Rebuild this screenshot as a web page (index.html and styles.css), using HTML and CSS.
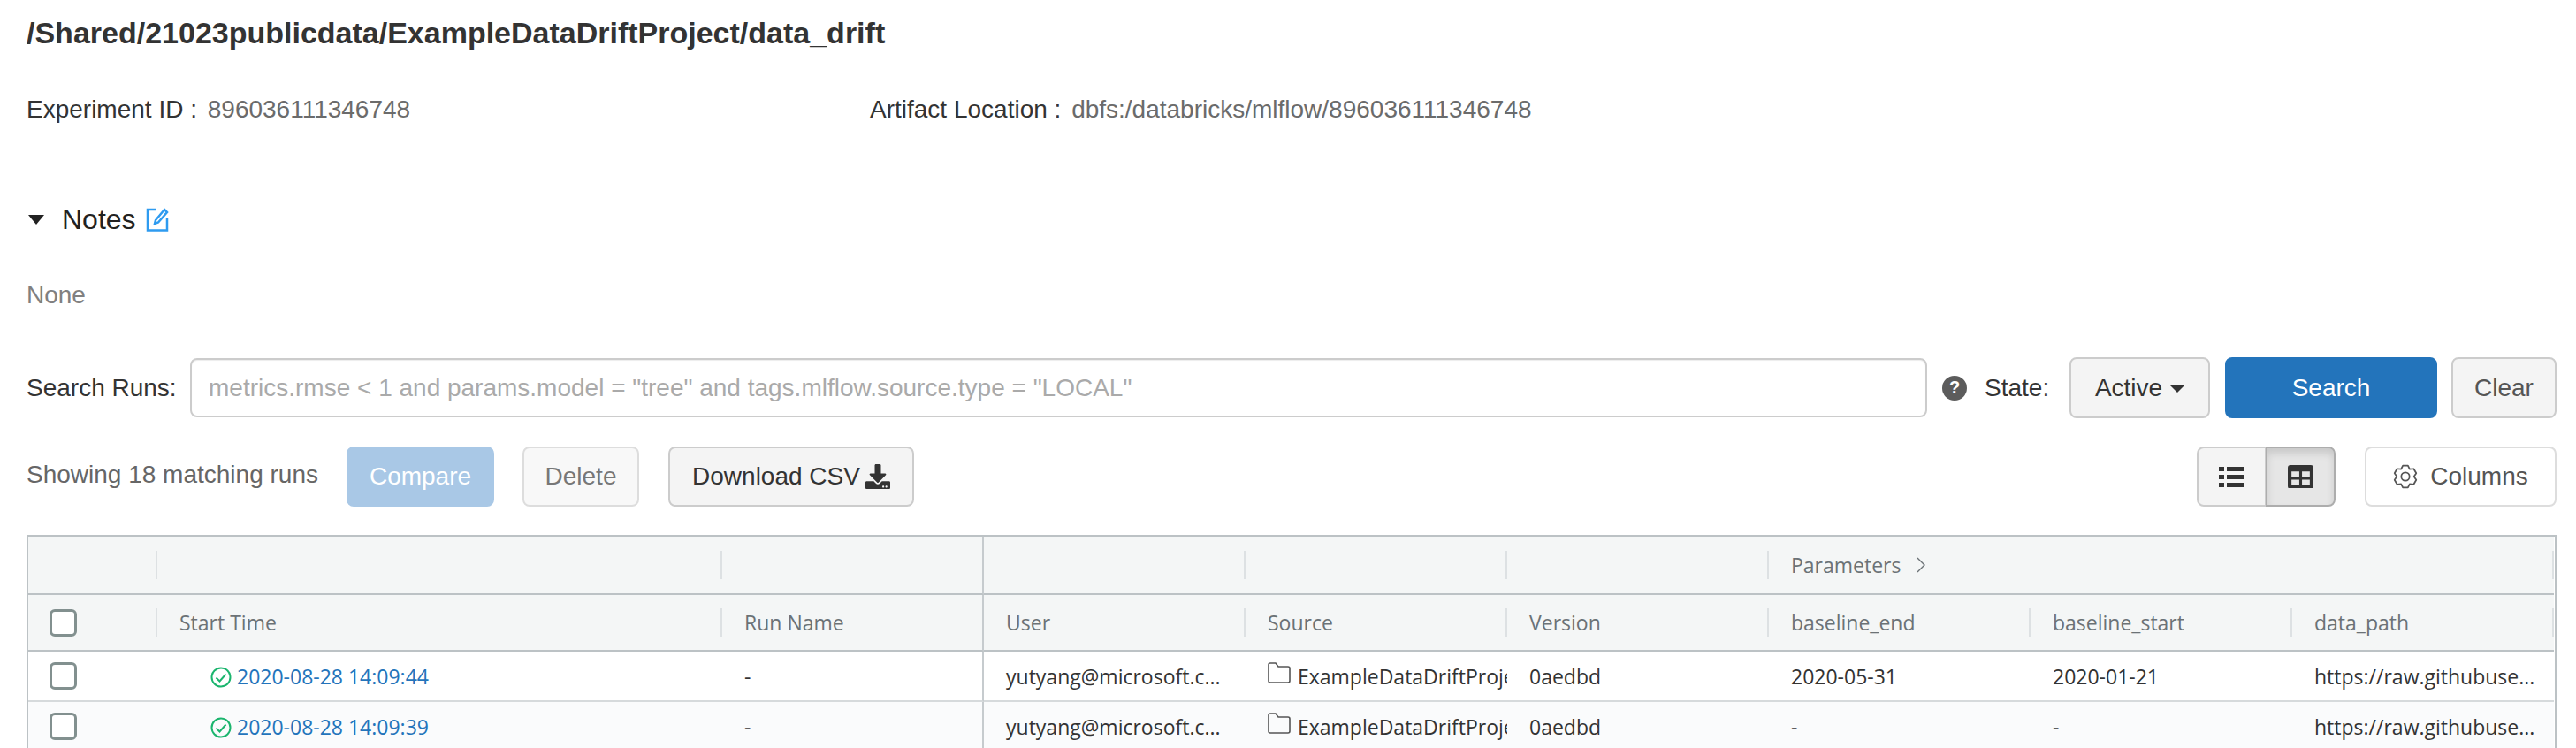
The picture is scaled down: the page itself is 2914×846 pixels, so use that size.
FILE: index.html
```html
<!DOCTYPE html>
<html>
<head>
    <title>data_drift - MLflow Experiment</title>
    <link rel="stylesheet" href="styles.css">
</head>
<body>
    <div class="container">
        <h1 class="title">/Shared/21023publicdata/ExampleDataDriftProject/data_drift</h1>

        <div class="meta-row">
            <div class="meta-item">
                <span class="meta-label">Experiment ID :</span>
                <span class="meta-value">896036111346748</span>
            </div>
            <div class="meta-item">
                <span class="meta-label">Artifact Location :</span>
                <span class="meta-value">dbfs:/databricks/mlflow/896036111346748</span>
            </div>
        </div>

        <div class="notes-head">
            <svg class="notes-caret" viewBox="0 0 18 11"><path d="M0 0h18L9 11z"/></svg>
            <span>Notes</span>
            <svg class="notes-edit" viewBox="0 0 26 27" fill="none">
                <path d="M12 2H2v23.500h22V11"/>
                <path d="M21 2l3 3-10 11.500-4 1.500 1-4z"/>
            </svg>
        </div>
        <p class="notes-body">None</p>

        <form class="search-row">
            <label class="search-label" for="search">Search Runs:</label>
            <input class="search-input" id="search" type="text" placeholder='metrics.rmse &lt; 1 and params.model = "tree" and tags.mlflow.source.type = "LOCAL"'>
            <span class="help-icon">?</span>
            <span class="state-label">State:</span>
            <button type="button" class="btn btn-state">Active <i class="btn-caret"></i></button>
            <button type="button" class="btn btn-search">Search</button>
            <button type="button" class="btn btn-clear">Clear</button>
        </form>

        <div class="actions-row">
            <span class="run-count">Showing 18 matching runs</span>
            <button type="button" class="btn btn-compare">Compare</button>
            <button type="button" class="btn btn-delete">Delete</button>
            <button type="button" class="btn btn-download">
                Download CSV
                <svg class="download-icon" viewBox="0 0 512 512"><path d="M216 0h80c13.300 0 24 10.700 24 24v168h87.700c17.800 0 26.700 21.500 14.100 34.100L269.700 378.300c-7.500 7.500-19.800 7.500-27.300 0L90.100 226.100c-12.600-12.600-3.700-34.100 14.100-34.100H192V24c0-13.300 10.700-24 24-24zm296 376v112c0 13.300-10.700 24-24 24H24c-13.300 0-24-10.700-24-24V376c0-13.300 10.700-24 24-24h146.700l49 49c20.100 20.100 52.500 20.100 72.600 0l49-49H488c13.300 0 24 10.700 24 24zm-124 88c0-11-9-20-20-20s-20 9-20 20 9 20 20 20 20-9 20-20zm64 0c0-11-9-20-20-20s-20 9-20 20 9 20 20 20 20-9 20-20z"/></svg>
            </button>
            <div class="view-toggle">
                <button type="button" class="toggle-btn">
                    <svg viewBox="0 0 29 23"><path d="M0 0h6v5H0zM9 0h20v5H9zM0 9h6v5H0zM9 9h20v5H9zM0 18h6v5H0zM9 18h20v5H9z"/></svg>
                </button>
                <button type="button" class="toggle-btn toggle-active">
                    <svg viewBox="0 0 28 26"><path fill-rule="evenodd" d="M3 0h22a3 3 0 0 1 3 3v20a3 3 0 0 1-3 3H3a3 3 0 0 1-3-3V3a3 3 0 0 1 3-3zM4 7v6h8.500V7zM15.500 7v6H24V7zM4 16v6h8.500v-6zM15.500 16v6H24v-6z"/></svg>
                </button>
            </div>
            <button type="button" class="btn btn-columns">
                <svg class="gear-icon" viewBox="0 0 24 24" fill="none">
                    <path d="M9.530 1.300h4.940l1.680 3.510 3.890-.31 2.480 4.280L20.300 12l2.220 3.220-2.480 4.280-3.890-.31-1.680 3.510H9.530l-1.680-3.510-3.890.31-2.480-4.280L3.700 12 1.480 8.780 3.960 4.500l3.890.31z"/>
                    <circle cx="12" cy="12" r="4"/>
                </svg>
                Columns
            </button>
        </div>

        <div class="table-wrap">
            <table class="runs-table">
                <colgroup>
                    <col class="col-check">
                    <col class="col-start">
                    <col class="col-name">
                    <col class="col-std" span="6">
                </colgroup>
                <thead>
                    <tr class="group-row">
                        <th><div class="th-cell"></div></th>
                        <th><div class="th-cell"></div></th>
                        <th class="fixed-end"></th>
                        <th><div class="th-cell"></div></th>
                        <th><div class="th-cell"></div></th>
                        <th><div class="th-cell"></div></th>
                        <th colspan="3">
                            <div class="th-cell">Parameters
                                <svg class="chevron" viewBox="0 0 10 18" fill="none"><path d="M1 1l8 8-8 8"/></svg>
                            </div>
                        </th>
                    </tr>
                    <tr class="column-row">
                        <th><div class="th-cell th-check"><span class="checkbox"></span></div></th>
                        <th><div class="th-cell">Start Time</div></th>
                        <th class="fixed-end"><div class="th-cell th-last">Run Name</div></th>
                        <th><div class="th-cell">User</div></th>
                        <th><div class="th-cell">Source</div></th>
                        <th><div class="th-cell">Version</div></th>
                        <th><div class="th-cell">baseline_end</div></th>
                        <th><div class="th-cell">baseline_start</div></th>
                        <th><div class="th-cell">data_path</div></th>
                    </tr>
                </thead>
                <tbody>
                    <tr>
                        <td class="td-check"><span class="checkbox"></span></td>
                        <td class="td-start">
                            <svg class="status-icon" viewBox="0 0 24 24" fill="none"><circle cx="12" cy="12" r="10.500"/><path d="M6.500 12.500l4 4 7-8"/></svg>
                            <a class="run-link" href="#">2020-08-28 14:09:44</a>
                        </td>
                        <td class="fixed-end">-</td>
                        <td>yutyang@microsoft.c...</td>
                        <td class="td-source">
                            <svg class="folder-icon" viewBox="0 0 26 25" fill="none"><path d="M1 3a2 2 0 0 1 2-2h6l3 4h11a2 2 0 0 1 2 2v14a2 2 0 0 1-2 2H3a2 2 0 0 1-2-2z"/></svg>
                            ExampleDataDriftProject
                        </td>
                        <td>0aedbd</td>
                        <td>2020-05-31</td>
                        <td>2020-01-21</td>
                        <td>https://raw.githubuse...</td>
                    </tr>
                    <tr>
                        <td class="td-check"><span class="checkbox"></span></td>
                        <td class="td-start">
                            <svg class="status-icon" viewBox="0 0 24 24" fill="none"><circle cx="12" cy="12" r="10.500"/><path d="M6.500 12.500l4 4 7-8"/></svg>
                            <a class="run-link" href="#">2020-08-28 14:09:39</a>
                        </td>
                        <td class="fixed-end">-</td>
                        <td>yutyang@microsoft.c...</td>
                        <td class="td-source">
                            <svg class="folder-icon" viewBox="0 0 26 25" fill="none"><path d="M1 3a2 2 0 0 1 2-2h6l3 4h11a2 2 0 0 1 2 2v14a2 2 0 0 1-2 2H3a2 2 0 0 1-2-2z"/></svg>
                            ExampleDataDriftProject
                        </td>
                        <td>0aedbd</td>
                        <td>-</td>
                        <td>-</td>
                        <td>https://raw.githubuse...</td>
                    </tr>
                </tbody>
            </table>
        </div>
    </div>
</body>
</html>
```

FILE: styles.css
```css
html,
body {
	height: 100%;
	overflow: hidden;
}

body {
	margin: 0;
	background: #fff;
	color: #333;
	font-family: "Liberation Sans", Arial, sans-serif;
	font-size: 28px;
}

.container {
	padding: 0 22px 0 30px;
}

.title {
	margin: 0;
	height: 74px;
	line-height: 74px;
	font-size: 34px;
	font-weight: bold;
	color: #333;
}

/* Experiment metadata */
.meta-row {
	display: flex;
	height: 48px;
	margin-top: 26px;
	align-items: center;
}

.meta-item {
	width: 954px;
	white-space: nowrap;
}

.meta-label {
	margin-right: 4px;
}

.meta-value {
	color: #6b6b6b;
}

/* Notes */
.notes-head {
	display: flex;
	align-items: center;
	height: 48px;
	margin-top: 76px;
	font-size: 32px;
	color: #222;
}

.notes-caret {
	width: 18px;
	height: 11px;
	margin: 0 20px 0 2px;
	fill: #222;
}

.notes-edit {
	width: 26px;
	height: 27px;
	margin-left: 11px;
	stroke: #2e9bf0;
	stroke-width: 2.5;
}

.notes-body {
	margin: 38px 0 0;
	height: 48px;
	line-height: 48px;
	color: #808080;
}

/* Search */
.search-row {
	display: flex;
	align-items: center;
	height: 69px;
	margin-top: 46px;
}

.search-label {
	width: 185px;
	white-space: nowrap;
}

.search-input {
	width: 1965px;
	height: 67px;
	box-sizing: border-box;
	padding: 0 19px;
	border: 2px solid #ccc;
	border-radius: 8px;
	font-family: inherit;
	font-size: 28px;
	box-shadow: inset 0 1px 1px rgba(0,0,0,0.075);
}

.search-input::placeholder {
	color: #aaa;
	opacity: 1;
}

.help-icon {
	display: flex;
	align-items: center;
	justify-content: center;
	width: 28px;
	height: 28px;
	margin-left: 17px;
	border-radius: 50%;
	background: #5c5c5c;
	color: #fff;
	font-size: 20px;
	font-weight: bold;
}

.state-label {
	margin-left: 20px;
	width: 96px;
}

.btn {
	display: flex;
	align-items: center;
	justify-content: center;
	box-sizing: border-box;
	height: 69px;
	padding: 0;
	border: 2px solid #ccc;
	border-radius: 8px;
	background: #f4f4f4;
	color: #333;
	font-family: inherit;
	font-size: 28px;
	white-space: nowrap;
}

.btn-state {
	width: 159px;
}

.btn-caret {
	width: 0;
	height: 0;
	margin-left: 9px;
	margin-top: 3px;
	border-top: 8px solid #333;
	border-left: 8px solid transparent;
	border-right: 8px solid transparent;
}

.btn-search {
	width: 240px;
	margin-left: 17px;
	background: #2374bb;
	border-color: #2374bb;
	color: #fff;
}

.btn-clear {
	width: 119px;
	margin-left: 16px;
	color: #555;
}

/* Toolbar above the table */
.actions-row {
	display: flex;
	align-items: center;
	height: 68px;
	margin-top: 32px;
}

.run-count {
	width: 362px;
	margin-top: -4px;
	color: #666;
}

.actions-row .btn {
	height: 68px;
}

.btn-compare {
	width: 167px;
	background: #a9c8e6;
	border-color: #a9c8e6;
	color: #fff;
}

.btn-delete {
	width: 132px;
	margin-left: 32px;
	background: #f8f8f8;
	border-color: #ddd;
	color: #777;
}

.btn-download {
	width: 278px;
	margin-left: 33px;
}

.download-icon {
	width: 28px;
	height: 28px;
	margin-left: 6px;
	fill: #333;
}

.view-toggle {
	display: flex;
	margin-left: auto;
	height: 68px;
}

.toggle-btn {
	width: 79px;
	padding: 0;
	border: 2px solid #ccc;
	border-radius: 8px 0 0 8px;
	background: #f4f4f4;
}

.toggle-btn svg {
	display: block;
	width: 29px;
	margin: 0 auto;
	fill: #333;
}

.toggle-active {
	width: 79px;
	border-color: #adadad;
	border-radius: 0 8px 8px 0;
	margin-left: -1px;
	background: #e6e6e6;
	box-shadow: inset 0 6px 9px rgba(0,0,0,0.125);
}

.btn.btn-columns {
	width: 217px;
	margin-left: 33px;
	background: #fff;
	border-color: #ddd;
	color: #555;
}

.gear-icon {
	width: 28px;
	height: 28px;
	margin-right: 14px;
	stroke: #555;
	stroke-width: 1.5;
	stroke-linejoin: round;
}

/* Runs table */
.table-wrap {
	margin-top: 32px;
	border: 2px solid #bcc2c5;
	border-bottom: none;
}

.runs-table {
	width: 2857px;
	table-layout: fixed;
	border-collapse: separate;
	border-spacing: 0;
	font-family: "Open Sans", sans-serif;
	font-size: 23px;
}

.col-check {
	width: 146px;
}

.col-start {
	width: 639px;
}

.col-name {
	width: 296px;
}

.col-std {
	width: 296px;
}

.runs-table th {
	padding: 0;
	background: #f4f6f6;
	color: #6b7276;
	font-weight: normal;
	text-align: left;
	border-bottom: 2px solid #bcc2c5;
}

.group-row th {
	height: 64px;
}

.column-row th {
	height: 62px;
}

.th-cell {
	display: flex;
	align-items: center;
	box-sizing: border-box;
	height: 32px;
	padding-left: 25px;
	border-right: 2px solid #dde1e3;
}

.th-check {
	padding-left: 24px;
}

.th-last {
	border-right: none;
}

.chevron {
	width: 10px;
	height: 18px;
	margin-left: 18px;
	stroke: #6b7276;
	stroke-width: 1.4;
}

.runs-table td {
	height: 55px;
	padding: 0 0 0 25px;
	background: #fff;
	border-bottom: 2px solid #d6dadc;
	white-space: nowrap;
	overflow: hidden;
}

.runs-table tbody tr:nth-child(even) td {
	background: #fafbfc;
}

.runs-table .fixed-end {
	border-right: 2px solid #c6cbce;
}

.checkbox {
	display: block;
	box-sizing: border-box;
	width: 31px;
	height: 31px;
	border: 3px solid #82908f;
	border-radius: 6px;
	background: #fff;
}

.runs-table .td-check {
	padding-left: 24px;
}

.runs-table .td-start {
	padding-left: 60px;
}

.status-icon {
	width: 24px;
	height: 24px;
	margin-right: 0;
	vertical-align: -4px;
	stroke: #1bb56e;
	stroke-width: 2;
}

.run-link {
	color: #2374bb;
	text-decoration: none;
}

.folder-icon {
	width: 26px;
	height: 25px;
	margin-right: 2px;
	vertical-align: 0;
	stroke: #555;
	stroke-width: 1.6;
}
```
